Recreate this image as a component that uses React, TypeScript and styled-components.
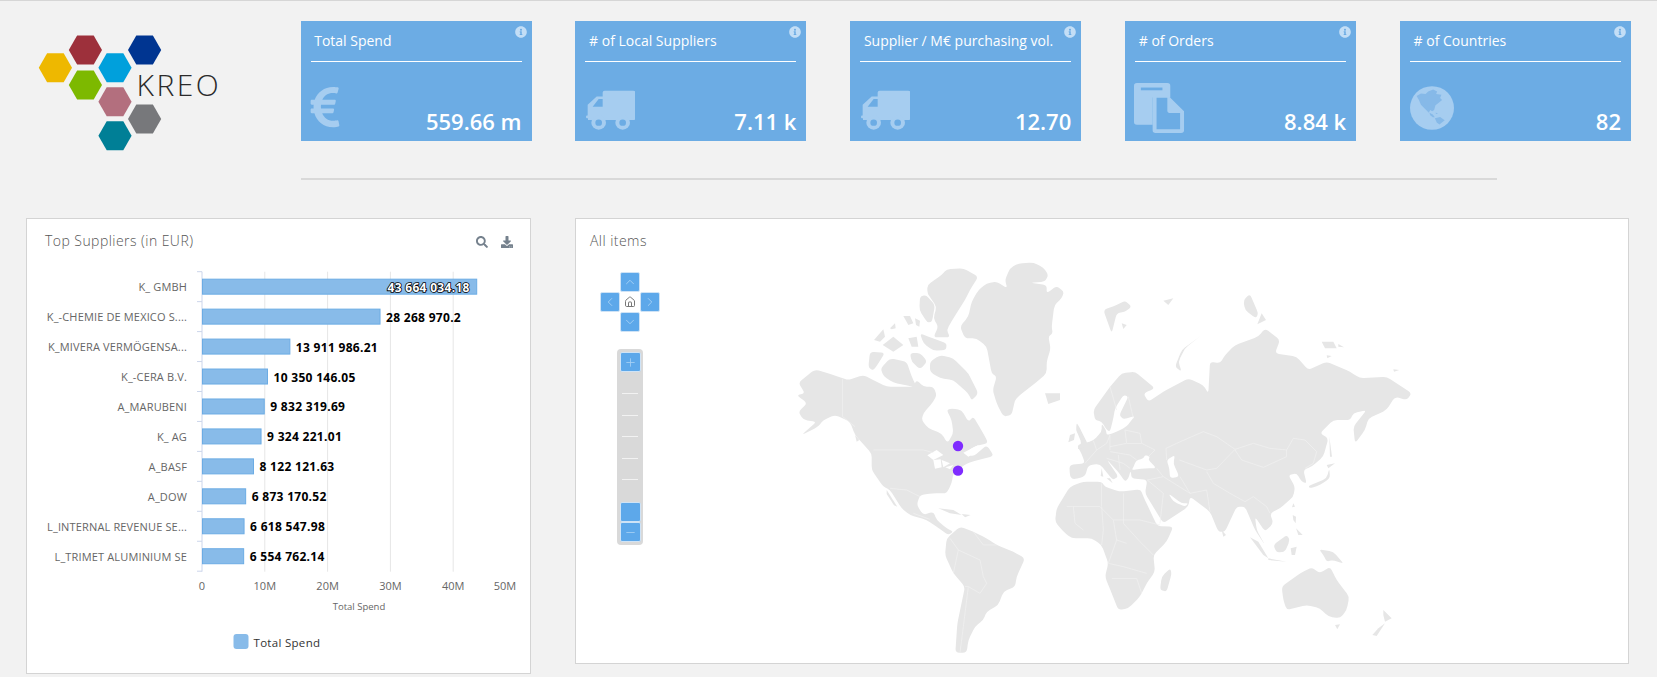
import React from "react";
import styled, { createGlobalStyle } from "styled-components";
import { FaEuroSign, FaSearch, FaDownload, FaInfoCircle } from "react-icons/fa";
import { ChevronUp, ChevronDown, ChevronLeft, ChevronRight, Home, Plus, Minus } from "lucide-react";

const Global = createGlobalStyle`
  html, body { margin: 0; padding: 0; background: #f2f2f2; }
  body { font-family: "Open Sans", "Liberation Sans", sans-serif; overflow: hidden; }
`;

const Page = styled.div`
  width: 1657px;
  height: 677px;
  border-top: 1px solid #d6d6d6;
  box-sizing: border-box;
  overflow: hidden;
`;
const Header = styled.header`
  display: flex;
  height: 177px;
`;
const LogoBox = styled.div`
  width: 300.6px;
  flex: none;
`;
const Kpis = styled.div`
  display: flex;
  gap: 43.85px;
  padding-top: 20px;
`;
const Card = styled.section`
  position: relative;
  width: 231px;
  height: 120px;
  box-sizing: border-box;
  padding: 0 10px;
  background: #6cace4;
  color: #fff;
  display: flex;
  flex-direction: column;
`;
const CardTitle = styled.div`
  font-size: 14px;
  line-height: 20px;
  padding: 10px 0 10px 3.6px;
  border-bottom: 1px solid #fff;
  white-space: nowrap;
`;
const CardBottom = styled.div`
  margin-top: auto;
  display: flex;
  justify-content: space-between;
  align-items: flex-end;
  padding-bottom: 5px;
`;
const Value = styled.div`
  font-size: 22px;
  font-weight: 600;
  line-height: 30px;
  white-space: nowrap;
`;
const IconSlot = styled.div<{ $drop: number; $shift: number }>`
  color: #a6cdf0;
  display: flex;
  margin-bottom: ${(p) => p.$drop}px;
  margin-left: ${(p) => p.$shift}px;
`;
const InfoBadge = styled.span`
  position: absolute;
  top: 5px;
  right: 5px;
  color: #c3def6;
  display: flex;
  font-size: 12px;
`;
const Rule = styled.hr`
  margin: 0 0 0 301px;
  width: 1196px;
  height: 2px;
  border: 0;
  background: #d9d9d9;
`;
const Content = styled.main`
  display: flex;
  align-items: flex-start;
  gap: 44px;
  padding: 38px 0 0 26px;
`;
const Panel = styled.section<{ $w: number; $h: number }>`
  position: relative;
  width: ${(p) => p.$w}px;
  height: ${(p) => p.$h}px;
  box-sizing: border-box;
  background: #fff;
  border: 1px solid #d4d4d4;
`;
const PanelHead = styled.div<{ $pad: string; $h: number }>`
  display: flex;
  justify-content: space-between;
  align-items: center;
  padding: ${(p) => p.$pad};
  height: ${(p) => p.$h}px;
`;
const PanelTitle = styled.h2`
  margin: 0;
  font-size: 14px;
  font-weight: 300;
  line-height: 20px;
  color: #555;
  letter-spacing: 0.45px;
`;
const Tools = styled.div`
  display: flex;
  gap: 13px;
  color: #75818d;
  font-size: 12px;
  padding-top: 3px;
`;
const ChartSvg = styled.svg`
  display: block;
  width: 503px;
  height: 420px;
  font-family: "Open Sans", "Liberation Sans", sans-serif;
`;
const MapSvg = styled.svg`
  display: block;
  width: 1052px;
  height: 403px;
  margin-top: -1px;
`;
const PanPad = styled.div`
  position: absolute;
  left: 24px;
  top: 53px;
  display: grid;
  grid-template-columns: repeat(3, 20px);
  grid-template-rows: repeat(3, 20px);
`;
const PanBtn = styled.button<{ $col: number; $row: number }>`
  grid-column: ${(p) => p.$col};
  grid-row: ${(p) => p.$row};
  background: #5da8ea;
  color: #a9d2f5;
  border: 1px solid #cfe3f6;
  border-radius: 2px;
  padding: 0;
  display: flex;
  align-items: center;
  justify-content: center;
`;
const PanHome = styled.span`
  grid-column: 2;
  grid-row: 2;
  color: #777;
  display: flex;
  align-items: center;
  justify-content: center;
`;
const ZoomBar = styled.div`
  position: absolute;
  left: 41px;
  top: 130px;
  width: 26px;
  height: 196px;
  box-sizing: border-box;
  padding: 3px 2px;
  background: #d9d9d9;
  border-radius: 4px;
  display: flex;
  flex-direction: column;
  align-items: center;
`;
const ZoomBtn = styled.div`
  width: 21px;
  height: 20px;
  flex: none;
  background: #5da8ea;
  color: #a9d2f5;
  border: 1px solid #cfe3f6;
  box-sizing: border-box;
  border-radius: 2px;
  display: flex;
  align-items: center;
  justify-content: center;
`;
const ZoomTicks = styled.div`
  flex: 1;
  align-self: stretch;
  display: flex;
  flex-direction: column;
  justify-content: space-between;
  padding: 21px 0 22px;
`;
const ZoomTick = styled.i`
  display: block;
  height: 1px;
  margin: 0 3px;
  background: #f2f2f2;
`;

const hex = (cx: number, cy: number) => {
  const r = 16.6;
  const h = 14.5;
  return `${cx - r},${cy} ${cx - r / 2},${cy - h} ${cx + r / 2},${cy - h} ${cx + r},${cy} ${cx + r / 2},${cy + h} ${cx - r / 2},${cy + h}`;
};
const hexes: [number, number, string][] = [
  [55.4, 66.7, "#eeb800"], [85.4, 49, "#9d303b"], [144.6, 49, "#003591"], [115, 66.7, "#00a0dc"],
  [85.4, 84, "#7db900"], [115, 100.7, "#b36f7e"], [144.6, 118, "#77787b"], [115, 134.7, "#007f96"],
];
const Logo = () => (
  <svg width="300" height="177" viewBox="0 0 300 177">
    {hexes.map(([x, y, c]) => <polygon key={c} points={hex(x, y)} fill={c} />)}
    <text x="136.5" y="95" fontFamily="Open Sans, sans-serif" fontWeight="300" fontSize="30" fill="#2a2a2a" letterSpacing="2.5">KREO</text>
  </svg>
);

const Truck = () => (
  <svg width="49" height="40" viewBox="0 0 147 125" preserveAspectRatio="none" fill="currentColor">
    <path d="M50 8 a6 6 0 0 1 6-6 H142 a6 6 0 0 1 6 6 V88 a6 6 0 0 1-6 6 H6 V88 H3 a3 4 0 0 1 0-8 H5 V46 L32 20 H50 Z M20 52 H50 V28 H38 Z" fillRule="evenodd" />
    <circle cx="38" cy="102" r="22" /><circle cx="110" cy="102" r="22" />
    <circle cx="38" cy="102" r="10" fill="#6cace4" /><circle cx="110" cy="102" r="10" fill="#6cace4" />
  </svg>
);
const Docs = () => (
  <svg width="51" height="50" viewBox="0 0 52 55" preserveAspectRatio="none" fill="currentColor">
    <path d="M3 0 H34 a3 3 0 0 1 3 3 V16 H19 V46 H3 a3 3 0 0 1-3-3 V3 a3 3 0 0 1 3-3 Z" />
    <rect x="7" y="5" width="22" height="3" fill="#6cace4" />
    <path d="M20 15 H36 L51 31 V52 a3 3 0 0 1-3 3 H22 a3 3 0 0 1-3-3 V15 Z M23 16 V51 H47 V33 H36 a3 3 0 0 1-2-2 V16 Z" fillRule="evenodd" />
    <path d="M38 20 L47 30 H38 Z" />
  </svg>
);
const Globe = () => (
  <svg width="44" height="44" viewBox="15 20 133 132">
    <ellipse cx="81.5" cy="86" rx="66.5" ry="66" fill="currentColor" />
    <g fill="#86b9e8">
      <path d="M35 50 L48 42 L62 44 L70 36 L85 30 L97 36 L94 44 L110 46 L106 56 L112 62 L100 72 L92 78 L88 92 L82 96 L76 92 L72 100 L60 88 L48 76 L42 62 Z" />
      <path d="M74 100 L84 106 L90 114 L84 114 L76 108 Z" />
      <path d="M90 117 L106 113 L120 123 L104 136 L96 130 Z" />
      <path d="M92 100 L100 102 L94 104 Z" />
    </g>
  </svg>
);

const cards = [
  { t: "Total Spend", v: "559.66 m", icon: <FaEuroSign size={46} />, drop: 6, shift: -9 },
  { t: "# of Local Suppliers", v: "7.11 k", icon: <Truck />, drop: 6, shift: 1 },
  { t: "Supplier / M€ purchasing vol.", v: "12.70", icon: <Truck />, drop: 6, shift: 1 },
  { t: "# of Orders", v: "8.84 k", icon: <Docs />, drop: 3, shift: -1 },
  { t: "# of Countries", v: "82", icon: <Globe />, drop: 6, shift: 0 },
];

const bars: [string, number, string][] = [
  ["K_ GMBH", 43664034.18, "43 664 034.18"],
  ["K_-CHEMIE DE MEXICO S....", 28268970.2, "28 268 970.2"],
  ["K_MIVERA VERMÖGENSA...", 13911986.21, "13 911 986.21"],
  ["K_-CERA B.V.", 10350146.05, "10 350 146.05"],
  ["A_MARUBENI", 9832319.69, "9 832 319.69"],
  ["K_ AG", 9324221.01, "9 324 221.01"],
  ["A_BASF", 8122121.63, "8 122 121.63"],
  ["A_DOW", 6873170.52, "6 873 170.52"],
  ["L_INTERNAL REVENUE SE...", 6618547.98, "6 618 547.98"],
  ["L_TRIMET ALUMINIUM SE", 6554762.14, "6 554 762.14"],
];
const ax = 175;
const top0 = 21.7;
const band = 29.95;
const Chart = () => (
  <ChartSvg viewBox="0 0 503 420">
    {[1, 2, 3, 4].map((i) => (
      <line key={i} x1={ax + i * 62.8} x2={ax + i * 62.8} y1={top0} y2={top0 + 300} stroke="#e6e6e6" />
    ))}
    <line x1={ax} x2={ax} y1={top0} y2={top0 + 300} stroke="#ccd6eb" />
    {Array.from({ length: 11 }).map((_, i) => (
      <line key={i} x1={ax - 5} x2={ax} y1={top0 + i * band} y2={top0 + i * band} stroke="#ccd6eb" />
    ))}
    {bars.map(([name, val, label], i) => {
      const w = (val / 1e6) * 6.28;
      const cy = top0 + i * band + band / 2;
      return (
        <g key={name}>
          <text x={ax - 15} y={cy + 4.5} textAnchor="end" fontSize="11" letterSpacing="0.15" fill="#666">{name}</text>
          <rect x={ax + 0.5} y={cy - 7.5} width={w} height={15} fill="#88bbe9" stroke="#6cace4" />
          {i === 0 ? (
            <text x={ax + 0.5 + w - 7} y={cy + 5} textAnchor="end" fontSize="12" fontWeight="700" fill="#fff" stroke="#000" strokeWidth="1.6" style={{ paintOrder: "stroke" }} letterSpacing="0.3">{label}</text>
          ) : (
            <text x={ax + w + 6.5} y={cy + 5} fontSize="12" fontWeight="700" fill="#000" letterSpacing="0.3">{label}</text>
          )}
        </g>
      );
    })}
    {["0", "10M", "20M", "30M", "40M"].map((l, i) => (
      <text key={l} x={ax + i * 62.8} y={top0 + 318.5} textAnchor="middle" fontSize="11" fill="#666">{l}</text>
    ))}
    <text x={ax + 303} y={top0 + 318.5} textAnchor="middle" fontSize="11" fill="#666">50M</text>
    <text x={332} y={top0 + 338} textAnchor="middle" fontSize="9.5" fill="#666">Total Spend</text>
    <rect x={206.5} y={384} width={15} height={15} rx={3} fill="#88bbe9" />
    <text x={226.5} y={397} fontSize="11.5" fill="#333" letterSpacing="0.3">Total Spend</text>
  </ChartSvg>
);

// Rounds the corners of a traced outline so coasts read as coasts.
const smooth = (d: string) => {
  const pts = (d.match(/-?\d+(?:\.\d+)?,-?\d+(?:\.\d+)?/g) || []).map((s) => s.split(",").map(Number));
  if (pts.length < 5) return d;
  const toward = (p: number[], q: number[]) => {
    const dx = q[0] - p[0];
    const dy = q[1] - p[1];
    const len = Math.hypot(dx, dy) || 1;
    const k = Math.min(len * 0.35, 12) / len;
    return [p[0] + dx * k, p[1] + dy * k];
  };
  let out = "";
  pts.forEach((p, i) => {
    const a = toward(p, pts[(i - 1 + pts.length) % pts.length]);
    const b = toward(p, pts[(i + 1) % pts.length]);
    out += `${i ? "L" : "M"}${a[0]},${a[1]} Q${p[0]},${p[1]} ${b[0]},${b[1]} `;
  });
  return out + "Z";
};

const land = [
  "M855,150 L870,115 L895,100 L940,98 L970,112 L985,135 L975,155 L930,158 L980,165 L980,190 L1010,168 L1032,185 L1025,205 L1003,225 L995,290 L998,310 L985,320 L992,355 L980,395 L980,430 L945,460 L900,495 L885,510 L875,555 L850,560 L830,520 L818,480 L830,440 L815,430 L800,350 L770,325 L735,325 L720,290 L745,260 L755,215 L775,180 L800,160 L830,155 L862,175 Z",
  "M622,165 L665,135 L680,118 L730,115 L775,140 L750,180 L735,210 L700,265 L680,300 L690,322 L640,322 L655,290 L640,265 L650,230 L622,190 Z",
  "M600,200 L618,195 L645,225 L636,275 L622,278 L598,240 Z",
  "M462,330 L490,298 L495,320 L480,335 Z", "M510,295 L525,280 L527,295 L515,298 Z", "M550,258 L570,258 L580,280 L565,285 Z",
  "M488,345 L520,320 L550,345 L520,365 Z", "M565,325 L590,320 L595,350 L575,350 Z", "M600,310 L625,320 L680,340 L678,360 L640,362 L610,340 Z", "M585,265 L600,272 L598,290 L588,285 Z",
  "M450,365 L495,368 L475,400 L460,422 L445,412 Z",
  "M482,415 L510,385 L560,395 L575,440 L590,470 L570,468 L520,458 L490,438 Z",
  "M630,395 L660,375 L700,385 L745,430 L775,490 L755,512 L745,490 L700,450 L660,445 L630,425 Z",
  "M570,370 L600,368 L622,395 L600,418 L575,395 Z",
  "M235,458 L285,418 L340,435 L370,445 L385,450 L430,435 L470,455 L500,470 L580,470 L590,450 L610,470 L640,470 L650,495 L640,515 L610,550 L605,570 L625,595 L665,610 L682,640 L700,610 L695,570 L680,540 L695,535 L725,540 L745,575 L760,560 L790,610 L805,640 L765,648 L735,670 L760,680 L800,645 L822,678 L775,690 L740,700 L700,730 L695,760 L680,790 L665,790 L640,790 L600,795 L590,825 L610,855 L640,845 L650,870 L680,895 L700,905 L685,915 L650,890 L620,870 L570,855 L545,835 L510,780 L490,770 L455,720 L455,670 L432,645 L405,615 L390,575 L345,555 L310,570 L295,590 L245,615 L290,575 L250,570 L235,545 L262,520 L230,495 L255,490 Z",
  "M500,780 L532,830 L522,826 L500,792 Z",
  "M655,835 L700,840 L725,855 L690,850 Z", "M725,852 L752,855 L735,862 Z",
  "M405,615 L418,630 L410,635 Z",
  "M680,925 L720,890 L760,905 L800,925 L830,945 L880,965 L915,985 L890,1040 L885,1070 L850,1085 L835,1125 L800,1145 L790,1170 L765,1190 L745,1230 L740,1268 L706,1268 L712,1180 L735,1070 L700,1030 L675,975 Z",
  "M1010,835 L1050,770 L1090,755 L1145,755 L1155,770 L1200,785 L1262,778 L1270,800 L1312,888 L1360,890 L1340,935 L1300,975 L1305,1025 L1280,1060 L1260,1100 L1225,1135 L1195,1140 L1175,1090 L1155,1040 L1165,1000 L1145,945 L1115,925 L1055,925 L1030,905 L1005,875 Z",
  "M1350,1015 L1355,1030 L1340,1085 L1320,1080 L1325,1040 Z",
  "M1060,748 L1050,740 L1048,705 L1095,700 L1085,672 L1070,645 L1120,632 L1145,605 L1145,580 L1158,600 L1160,615 L1185,608 L1220,590 L1235,570 L1245,558 L1210,568 L1198,555 L1225,500 L1210,495 L1185,535 L1180,565 L1170,605 L1160,600 L1145,575 L1125,570 L1120,540 L1170,470 L1205,430 L1245,425 L1305,475 L1270,490 L1285,515 L1330,485 L1405,445 L1450,465 L1465,490 L1470,395 L1500,400 L1515,375 L1545,345 L1615,320 L1635,295 L1680,330 L1665,370 L1730,380 L1765,420 L1820,395 L1890,425 L1920,445 L2000,440 L2075,490 L2060,510 L2025,500 L2000,540 L1945,565 L1935,600 L1905,640 L1900,590 L1940,540 L1900,550 L1890,570 L1840,570 L1800,610 L1825,625 L1810,680 L1775,710 L1750,720 L1760,760 L1745,755 L1730,730 L1705,735 L1725,770 L1720,800 L1680,835 L1650,850 L1660,880 L1635,905 L1605,860 L1610,900 L1635,945 L1605,900 L1575,830 L1550,830 L1515,905 L1495,905 L1470,845 L1410,800 L1405,830 L1330,880 L1275,790 L1282,750 L1235,745 L1232,722 L1225,745 L1215,755 L1198,730 L1160,688 L1195,740 L1178,750 L1140,702 L1105,705 L1095,740 Z",
  "M1445,315 L1385,360 L1365,410 L1385,425 L1375,395 L1395,355 Z",
  "M1150,240 L1190,225 L1215,212 L1235,230 L1215,245 L1190,250 L1175,310 Z", "M1205,280 L1220,285 L1210,297 Z",
  "M1330,212 L1360,205 L1345,225 Z",
  "M1590,192 L1615,250 L1608,265 L1575,240 L1570,210 Z", "M1625,250 L1638,270 L1612,283 Z",
  "M1805,335 L1840,335 L1850,355 L1815,355 Z", "M1855,342 L1872,352 L1855,350 Z", "M1820,376 L1835,378 L1822,385 Z", "M2020,418 L2038,420 L2022,425 Z",
  "M975,490 L1020,490 L1020,510 L985,522 Z",
  "M1070,578 L1080,595 L1105,645 L1070,660 L1085,640 L1075,615 L1068,600 Z", "M1050,615 L1065,610 L1062,630 L1045,637 Z",
  "M1170,745 L1178,760 L1160,745 Z", "M1145,715 L1150,740 L1142,738 Z",
  "M1828,620 L1836,680 L1830,680 Z",
  "M1820,745 L1828,715 L1830,745 L1800,765 L1770,775 L1765,768 Z", "M1820,705 L1845,700 L1825,715 Z",
  "M1505,900 L1518,915 L1510,920 Z", "M1720,820 L1725,830 L1716,832 Z",
  "M1718,855 L1728,860 L1727,880 L1720,870 Z", "M1728,895 L1748,915 L1735,915 Z",
  "M1660,945 L1700,915 L1710,930 L1695,965 L1670,968 Z", "M1590,922 L1615,935 L1645,985 L1630,975 Z", "M1645,985 L1700,995 L1645,990 Z",
  "M1712,955 L1730,950 L1725,975 L1715,975 Z", "M1797,958 L1840,965 L1872,1002 L1840,990 L1820,995 L1810,975 Z",
  "M1685,1070 L1740,1030 L1775,1012 L1800,1030 L1830,1010 L1850,1050 L1888,1100 L1880,1140 L1860,1165 L1825,1160 L1800,1135 L1760,1125 L1700,1140 L1690,1110 Z",
  "M1845,1185 L1860,1183 L1852,1198 Z", "M1990,1140 L2015,1165 L1995,1175 L1990,1155 Z", "M1995,1180 L1970,1218 L1957,1215 L1975,1195 Z",
];
const seas = [
  "M1240,712 L1248,692 L1270,685 L1275,675 L1290,680 L1285,690 L1310,715 L1275,715 L1235,720 Z",
  "M1340,690 L1365,675 L1360,700 L1378,740 L1350,745 L1348,715 Z",
  "M1345,790 L1385,820 L1405,820 L1395,830 L1360,815 Z",
  "M622,676 L650,660 L670,675 L640,690 Z", "M640,690 L662,688 L665,712 L645,716 Z", "M665,690 L690,700 L670,712 Z",
  "M676,712 L700,705 L690,718 Z", "M730,668 L775,645 L780,660 L745,680 Z",
];
const borders = [
  "M368,447 L368,560 L405,590", "M460,660 L610,660 L640,668", "M510,775 L560,780 L600,800", "M580,850 L630,868",
  "M690,925 L715,960 L700,1030", "M715,960 L780,990 L790,1040 L800,1060 L780,1090 L745,1070 L735,1070", "M760,905 L790,945 L830,945", "M745,1070 L730,1190 L720,1268",
  "M1040,830 L1140,830 L1180,870 L1260,870 L1320,885", "M1145,760 L1145,830 L1150,900 L1145,945", "M1210,790 L1210,880 L1260,935 L1300,975", "M1180,870 L1190,930 L1165,1000", "M1165,1000 L1210,1010 L1280,1030", "M1175,1045 L1250,1045 L1265,1090", "M1060,830 L1065,880 L1090,900", "M1220,940 L1190,930",
  "M1170,470 L1190,540", "M1225,500 L1240,565",
  "M1215,600 L1260,610 L1265,640 L1305,660 L1285,680", "M1120,632 L1130,660 L1160,640 L1170,615", "M1130,660 L1095,700", "M1170,615 L1170,660", "M1215,600 L1220,640 L1170,650", "M1220,640 L1265,640",
  "M1170,665 L1230,675 L1250,690", "M1195,675 L1200,720", "M1160,685 L1210,700 L1230,715", "M1310,715 L1330,740 L1282,750",
  "M1338,655 L1370,640 L1415,620 L1450,605 L1490,620 L1545,658 L1600,640 L1650,655 L1700,660 L1720,625 L1755,630 L1790,665 L1780,700 L1755,715",
  "M1545,660 L1565,690 L1630,712 L1700,680 L1700,660", "M1338,655 L1340,690", "M1378,690 L1460,720 L1490,715 L1545,658", "M1460,725 L1480,760 L1530,790 L1575,815 L1600,800", "M1380,740 L1410,790 L1460,780 L1470,845",
  "M1330,740 L1410,790", "M1282,750 L1330,790 L1320,880", "M1600,800 L1640,830 L1650,850",
];
const WorldMap = () => (
  <MapSvg viewBox="-432 60 3156 1209">
    <g fill="#e6e6e6">{land.map((d, i) => <path key={i} d={smooth(d)} />)}</g>
    <g fill="#fff">{seas.map((d, i) => <path key={i} d={smooth(d)} />)}</g>
    <g fill="none" stroke="#f1f1f1" strokeWidth="2">{borders.map((d, i) => <path key={i} d={d} />)}</g>
    <circle cx="714" cy="648" r="15.5" fill="#7f2bff" />
    <circle cx="714" cy="722" r="15.5" fill="#7f2bff" />
  </MapSvg>
);

export default function App() {
  return (
    <Page>
      <Global />
      <Header>
        <LogoBox><Logo /></LogoBox>
        <Kpis>
          {cards.map((c) => (
            <Card key={c.t}>
              <InfoBadge><FaInfoCircle /></InfoBadge>
              <CardTitle>{c.t}</CardTitle>
              <CardBottom>
                <IconSlot $drop={c.drop} $shift={c.shift}>{c.icon}</IconSlot>
                <Value>{c.v}</Value>
              </CardBottom>
            </Card>
          ))}
        </Kpis>
      </Header>
      <Rule />
      <Content>
        <Panel $w={505} $h={456}>
          <PanelHead $pad="12px 17px 0 18px" $h={19}>
            <PanelTitle>Top Suppliers (in EUR)</PanelTitle>
            <Tools><FaSearch /><FaDownload /></Tools>
          </PanelHead>
          <Chart />
        </Panel>
        <Panel $w={1054} $h={446}>
          <PanelHead $pad="12px 14px 0" $h={20}>
            <PanelTitle>All items</PanelTitle>
          </PanelHead>
          <WorldMap />
          <PanPad>
            <PanBtn $col={2} $row={1}><ChevronUp size={14} strokeWidth={1.5} /></PanBtn>
            <PanBtn $col={1} $row={2}><ChevronLeft size={14} strokeWidth={1.5} /></PanBtn>
            <PanHome><Home size={12} strokeWidth={2} /></PanHome>
            <PanBtn $col={3} $row={2}><ChevronRight size={14} strokeWidth={1.5} /></PanBtn>
            <PanBtn $col={2} $row={3}><ChevronDown size={14} strokeWidth={1.5} /></PanBtn>
          </PanPad>
          <ZoomBar>
            <ZoomBtn><Plus size={13} strokeWidth={1.5} /></ZoomBtn>
            <ZoomTicks>
              {[0, 1, 2, 3, 4].map((i) => <ZoomTick key={i} />)}
            </ZoomTicks>
            <ZoomBtn />
            <ZoomBtn><Minus size={13} strokeWidth={1.5} /></ZoomBtn>
          </ZoomBar>
        </Panel>
      </Content>
    </Page>
  );
}
